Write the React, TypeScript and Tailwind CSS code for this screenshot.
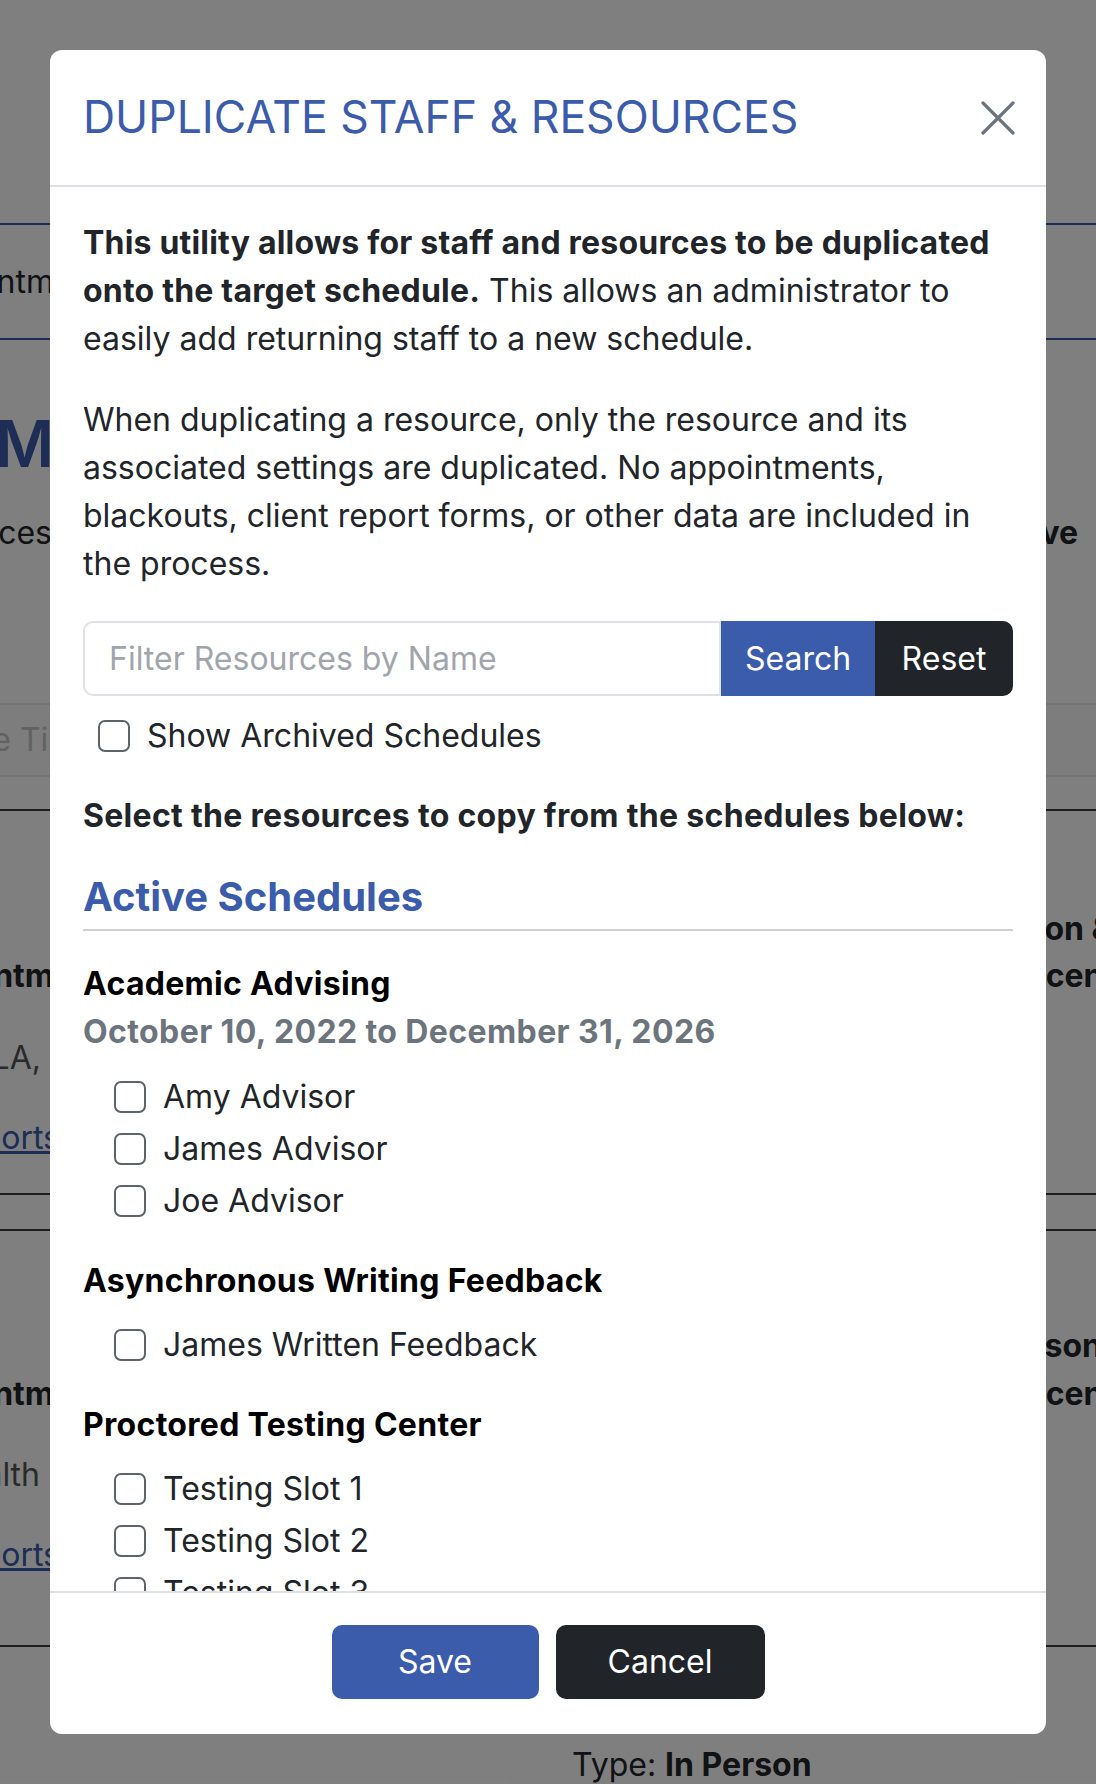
import React from "react";

function Box() {
  return (
    <span className="inline-block h-[32px] w-[32px] shrink-0 rounded-[7px] border-2 border-[#5c636a] bg-white" />
  );
}

function Item({ label }: { label: string }) {
  return (
    <div className="flex h-[52px] items-center gap-[17px] pl-[31px]">
      <Box />
      <span>{label}</span>
    </div>
  );
}

function Background() {
  return (
    <div className="flex flex-col whitespace-nowrap text-[32px] leading-[48px] text-[#212529]">
      <div className="h-[223px]" />
      <div className="flex h-[117px] items-center border-y-2 border-[#3b5bab]">
        <div className="flex w-[50px] justify-end">
          <span className="-mr-[4px]">Appointm</span>
        </div>
      </div>
      <div className="flex h-[363px] justify-between">
        <div className="flex w-[50px] flex-col items-end pt-[64px]">
          <span className="-mr-[4px] text-[64px] font-semibold leading-[80px] text-[#3b5bab]">SM</span>
          <span className="-mr-[2px] mt-[25px]">Resources</span>
        </div>
        <div className="w-[50px] pt-[169px]">
          <span className="-ml-[68px] font-bold">Active</span>
        </div>
      </div>
      <div className="flex h-[74px] items-center border-y-2 border-[#e9e9e9] bg-[#fafafa]">
        <div className="flex w-[50px] justify-end">
          <span className="-mr-[45px] text-[#c4c4c4]">Date Time</span>
        </div>
      </div>
      <div className="h-[32px]" />
      <div className="flex h-[384px] justify-between border-t-2 border-[#3a3a3a]">
        <div className="flex w-[50px] flex-col items-end pt-[141px]">
          <span className="-mr-[4px] font-bold">Appointm</span>
          <span className="mr-[9px] mt-[34px] text-[#555]">UCLA,</span>
          <span className="-mr-[10px] mt-[32px] text-[#3b5bab] underline">Reports</span>
        </div>
        <div className="flex w-[50px] flex-col pt-[94px] leading-[47px]">
          <span className="-ml-[72px] font-bold">Person &amp;</span>
          <span className="-ml-[40px] font-bold">Recent</span>
        </div>
      </div>
      <div className="h-[36px] border-t-2 border-[#3a3a3a]" />
      <div className="flex h-[416px] justify-between border-t-2 border-[#3a3a3a]">
        <div className="flex w-[50px] flex-col items-end pt-[139px]">
          <span className="-mr-[4px] font-bold">Appointm</span>
          <span className="mr-[10px] mt-[33px] text-[#555]">Health</span>
          <span className="-mr-[10px] mt-[32px] text-[#3b5bab] underline">Reports</span>
        </div>
        <div className="flex w-[50px] flex-col pt-[91px]">
          <span className="-ml-[54px] font-bold">Person</span>
          <span className="-ml-[40px] font-bold">Recent</span>
        </div>
      </div>
      <div className="border-t-2 border-[#3a3a3a] pl-[572px] pt-[94px]">
        Type: <span className="font-bold">In Person</span>
      </div>
    </div>
  );
}

export default function App() {
  return (
    <div
      className="relative h-[1784px] w-[1096px] overflow-hidden bg-white"
      style={{ fontFamily: "Inter, 'Noto Sans', sans-serif" }}
    >
      <Background />
      <div className="absolute inset-0 bg-black/50" />
      <div className="absolute left-[50px] top-[50px] flex h-[1684px] w-[996px] flex-col overflow-hidden rounded-[12px] bg-white text-[#212529]">
        <div className="flex h-[137px] shrink-0 items-center justify-between border-b-2 border-[#dee2e6] pl-[33px] pr-[31px]">
          <h1 className="text-[44.5px] font-normal leading-none text-[#3b5bab]">DUPLICATE STAFF &amp; RESOURCES</h1>
          <svg width="34" height="34" viewBox="0 0 34 34" className="text-[#6c757d]">
            <path d="M2 2 L32 32 M32 2 L2 32" stroke="currentColor" strokeWidth="3.2" strokeLinecap="round" />
          </svg>
        </div>
        <div className="h-[1404px] shrink-0 overflow-hidden px-[33px] pt-[32px] text-[32px] leading-[48px]">
          <p className="mb-[33px]">
            <strong className="tracking-[0.2px]">
              This utility allows for staff and resources to be duplicated onto the target schedule.
            </strong>{" "}
            This allows an administrator to easily add returning staff to a new schedule.
          </p>
          <p className="mb-[33px]">
            When duplicating a resource, only the resource and its associated settings are duplicated. No
            appointments, blackouts, client report forms, or other data are included in the process.
          </p>
          <div className="flex h-[75px]">
            <div className="flex flex-1 items-center rounded-l-[10px] border-2 border-[#dee2e6] pl-[24px] text-[#a0a5ab]">
              Filter Resources by Name
            </div>
            <div className="flex w-[154px] items-center justify-center bg-[#3b5bab] text-white">Search</div>
            <div className="flex w-[138px] items-center justify-center rounded-r-[10px] bg-[#212529] text-white">
              Reset
            </div>
          </div>
          <div className="mt-[16px] flex h-[48px] items-center gap-[17px] pl-[15px]">
            <Box />
            <span>Show Archived Schedules</span>
          </div>
          <div className="mt-[32px] font-bold tracking-[0.3px]">
            Select the resources to copy from the schedules below:
          </div>
          <div className="mt-[29px] border-b-2 border-[#cfd1d4] pb-[4px] text-[40px] font-bold leading-[56px] text-[#3b5bab]">
            Active Schedules
          </div>
          <div className="mt-[29px] font-bold tracking-[0.3px] text-black">Academic Advising</div>
          <div className="font-bold tracking-[0.4px] text-[#6c757d]">October 10, 2022 to December 31, 2026</div>
          <div className="mt-[15px]">
            <Item label="Amy Advisor" />
            <Item label="James Advisor" />
            <Item label="Joe Advisor" />
          </div>
          <div className="mt-[30px] font-bold tracking-[0.3px] text-black">Asynchronous Writing Feedback</div>
          <div className="mt-[14px]">
            <Item label="James Written Feedback" />
          </div>
          <div className="mt-[30px] font-bold tracking-[0.3px] text-black">Proctored Testing Center</div>
          <div className="mt-[14px]">
            <Item label="Testing Slot 1" />
            <Item label="Testing Slot 2" />
            <Item label="Testing Slot 3" />
          </div>
        </div>
        <div className="flex flex-1 items-start justify-center gap-[17px] border-t-2 border-[#dee2e6] pt-[32px]">
          <button className="h-[74px] w-[207px] rounded-[10px] bg-[#3b5bab] text-[32px] text-white">Save</button>
          <button className="h-[74px] w-[209px] rounded-[10px] bg-[#212529] text-[32px] text-white">Cancel</button>
        </div>
      </div>
    </div>
  );
}
